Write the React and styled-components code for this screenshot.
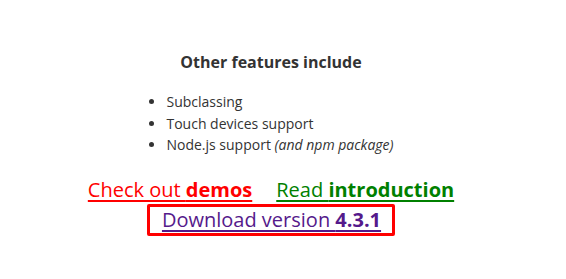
import React from 'react';
import styled, { createGlobalStyle } from 'styled-components';

const GlobalStyle = createGlobalStyle`
  body {
    margin: 0;
    background: #fff;
    font-family: "Open Sans", "DejaVu Sans", sans-serif;
    color: #333;
  }
`;

const Page = styled.div`
  width: 542px;
  padding-top: 50px;
  text-align: center;
`;

const Title = styled.h3`
  margin: 0 0 17px;
  font-size: 16px;
  font-weight: 700;
  line-height: 24px;
`;

const List = styled.ul`
  display: inline-block;
  margin: 0 0 22px -2px;
  padding-left: 20px;
  text-align: left;
  font-size: 14px;
  line-height: 21.5px;
`;

const Note = styled.em`
  font-style: italic;
`;

const Links = styled.div`
  display: flex;
  justify-content: center;
  gap: 24px;
  font-size: 20px;
  line-height: 24px;
`;

const Link = styled.a`
  color: ${(p) => p.color};
  text-decoration: underline;
  text-underline-offset: 3px;
`;

const Download = styled.div`
  display: inline-block;
  margin-top: 2px;
  padding: 0 11px 0 12px;
  border: 3px solid #ff0000;
  border-radius: 2px;
  font-size: 20px;
  line-height: 26px;
`;

export default function App() {
  return (
    <>
      <GlobalStyle />
      <Page>
        <Title>Other features include</Title>
        <List>
          <li>Subclassing</li>
          <li>Touch devices support</li>
          <li>
            Node.js support <Note>(and npm package)</Note>
          </li>
        </List>
        <Links>
          <Link href="#" color="#ff0000">
            Check out <b>demos</b>
          </Link>
          <Link href="#" color="#008000">
            Read <b>introduction</b>
          </Link>
        </Links>
        <Download>
          <Link href="#" color="#551a8b">
            Download version <b>4.3.1</b>
          </Link>
        </Download>
      </Page>
    </>
  );
}
